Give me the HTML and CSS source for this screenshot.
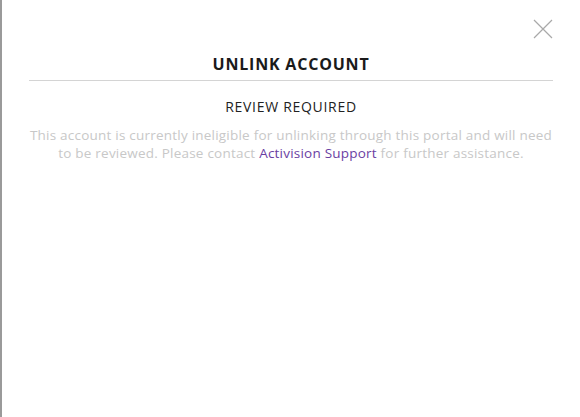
FILE: index.html
```html
<!DOCTYPE html>
<html>
<head>
<meta charset="utf-8">
<link rel="stylesheet" href="styles.css">
</head>
<body>
<div class="modal">
  <div class="top">
    <button class="close" aria-label="Close">
      <svg width="20" height="20" viewBox="0 0 20 20"><path d="M1 1 L19 19 M19 1 L1 19" stroke="#a9a9a9" stroke-width="1.2" fill="none"/></svg>
    </button>
  </div>
  <h1 class="title">UNLINK ACCOUNT</h1>
  <div class="rule"></div>
  <h2 class="subtitle">REVIEW REQUIRED</h2>
  <p class="body">This account is currently ineligible for unlinking through this portal and will need to be reviewed. Please contact <a class="link" href="#">Activision Support</a> for further assistance.</p>
</div>
</body>
</html>
```
FILE: styles.css
```css
html, body { margin: 0; padding: 0; background: #fff; }
body { font-family: "Open Sans", sans-serif; }
.modal {
  box-sizing: border-box;
  width: 580px;
  height: 417px;
  border-left: 2px solid #9a9a9a;
  padding: 0 27px;
  display: flex;
  flex-direction: column;
}
.top { display: flex; justify-content: flex-end; padding-top: 19px; height: 21px; }
.close { border: 0; background: none; padding: 0; width: 20px; height: 20px; display: block; }
.close svg { display: block; }
.title {
  margin: 14px 0 0;
  text-align: center;
  font-size: 16px;
  font-weight: 700;
  letter-spacing: 0.8px;
  color: #1a1a1a;
  line-height: 20px;
}
.rule { height: 1px; background: #d4d4d4; margin-top: 6px; }
.subtitle {
  margin: 16px 0 0;
  text-align: center;
  font-size: 14px;
  font-weight: 400;
  letter-spacing: 0.7px;
  color: #222;
  line-height: 20px;
}
.body {
  margin: 9px 0 0;
  text-align: center;
  font-size: 13.5px;
  letter-spacing: 0.22px;
  line-height: 18px;
  color: #c8c8c8;
}
.link { color: #6a3ea2; text-decoration: none; }
```
